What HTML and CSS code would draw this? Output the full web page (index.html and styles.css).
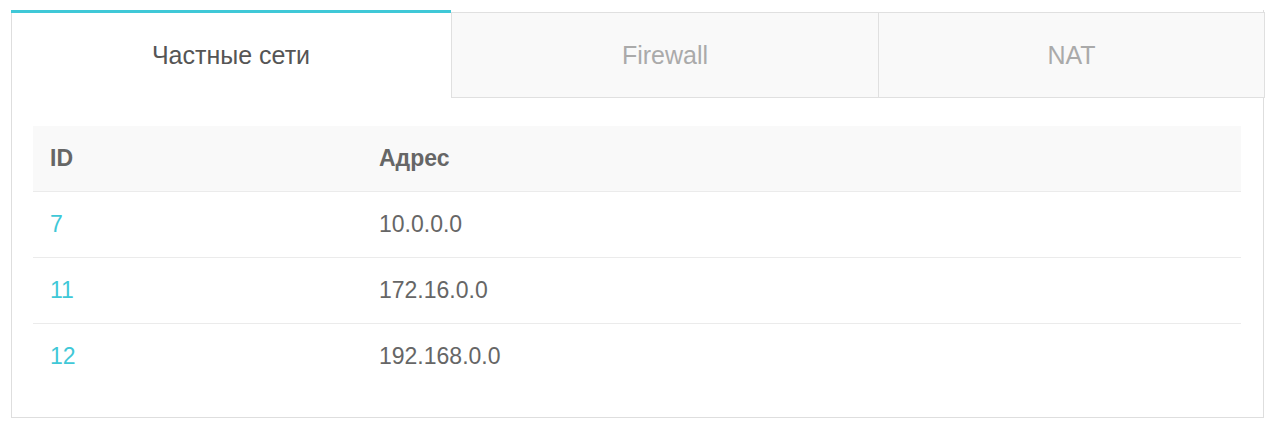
FILE: index.html
```html
<!DOCTYPE html>
<html lang="ru">
<head>
    <meta charset="UTF-8">
    <meta name="viewport" content="width=device-width, initial-scale=1.0">
    <title>Сети</title>
    <link rel="stylesheet" href="styles.css">
</head>
<body>
    <div class="panel">
        <div class="tabs">
            <div class="tab active">Частные сети</div>
            <div class="tab middle">Firewall</div>
            <div class="tab last">NAT</div>
        </div>
        <div class="content">
            <table class="networks">
                <colgroup>
                    <col class="col-id">
                    <col>
                </colgroup>
                <thead>
                    <tr>
                        <th>ID</th>
                        <th>Адрес</th>
                    </tr>
                </thead>
                <tbody>
                    <tr>
                        <td><a href="#">7</a></td>
                        <td>10.0.0.0</td>
                    </tr>
                    <tr>
                        <td><a href="#">11</a></td>
                        <td>172.16.0.0</td>
                    </tr>
                    <tr>
                        <td><a href="#">12</a></td>
                        <td>192.168.0.0</td>
                    </tr>
                </tbody>
            </table>
        </div>
    </div>
</body>
</html>
```

FILE: styles.css
```css
body {
    font-family: "Liberation Sans", Arial, sans-serif;
    background-color: #fff;
    margin: 0;
    padding: 10px 10px 0 11px;
}
.panel {
    border: 1px solid #dedede;
    border-top: none;
    background: #fff;
}
.tabs {
    display: flex;
    align-items: flex-end;
    margin: 0 -2px 0 -1px;
}
.tab {
    flex: 1;
    height: 84px;
    line-height: 84px;
    text-align: center;
    font-size: 25px;
    color: #aaa;
    background: #f9f9f9;
    border-top: 1px solid #e0e0e0;
    border-bottom: 1px solid #e0e0e0;
    border-left: 1px solid #e0e0e0;
}
.tab.middle {
    flex: 0 0 426px;
}
.tab.last {
    border-right: 1px solid #e0e0e0;
}
.tab.active {
    flex: 0 0 440px;
    height: 85px;
    line-height: 85px;
    color: #555;
    background: transparent;
    border: none;
    border-top: 3px solid #3fc8d7;
}
.content {
    padding: 28px 22px 28px 21px;
}
.networks {
    width: 100%;
    table-layout: fixed;
    border-collapse: collapse;
    font-size: 23px;
    color: #666;
}
.networks .col-id {
    width: 329px;
}
.networks th {
    text-align: left;
    font-weight: bold;
    background: #f9f9f9;
    height: 65px;
    padding: 0 17px;
    border-bottom: 1px solid #ebebeb;
}
.networks td {
    height: 65px;
    padding: 0 17px;
    border-bottom: 1px solid #ebebeb;
}
.networks tbody tr:last-child td {
    border-bottom: none;
}
.networks a {
    color: #3fc8d7;
    text-decoration: none;
}
```
